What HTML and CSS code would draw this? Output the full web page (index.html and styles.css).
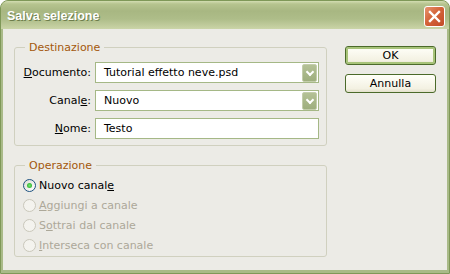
FILE: index.html
```html
<!DOCTYPE html>
<html lang="it">
<head>
  <meta charset="UTF-8">
  <title>Salva selezione</title>
  <link rel="stylesheet" href="styles.css">
</head>
<body>
  <div class="window">
    <div class="titlebar">
      <span class="title">Salva selezione</span>
      <button class="close" aria-label="Chiudi">
        <svg width="13" height="13" viewBox="0 0 13 13">
          <path d="M2 2 L11 11 M11 2 L2 11" stroke="#fff" stroke-width="2.4" stroke-linecap="square"/>
        </svg>
      </button>
    </div>

    <div class="client">
      <div class="groups">
        <fieldset class="group">
          <legend>Destinazione</legend>
          <div class="form">
            <label><u>D</u>ocumento:</label>
            <div class="select"><span>Tutorial effetto neve.psd</span><span class="arrow"></span></div>

            <label>Canal<u>e</u>:</label>
            <div class="select"><span>Nuovo</span><span class="arrow"></span></div>

            <label><u>N</u>ome:</label>
            <div class="field">Testo</div>
          </div>
        </fieldset>

        <fieldset class="group op">
          <legend>Operazione</legend>
          <div class="radios">
            <div class="radio checked"><span class="dot"></span><span>Nuovo canal<u>e</u></span></div>
            <div class="radio disabled"><span class="dot"></span><span><u>A</u>ggiungi a canale</span></div>
            <div class="radio disabled"><span class="dot"></span><span>S<u>o</u>ttrai dal canale</span></div>
            <div class="radio disabled"><span class="dot"></span><span><u>I</u>nterseca con canale</span></div>
          </div>
        </fieldset>
      </div>

      <div class="buttons">
        <button class="btn default">OK</button>
        <button class="btn">Annulla</button>
      </div>
    </div>
  </div>
</body>
</html>
```

FILE: styles.css
```css
:root {
  --frame: #a9ba88;
  --frame-dark: #7f9858;
  --client: #ecebe6;
  --group-line: #d0d0bf;
  --legend: #a3580c;
  --field-line: #a5b886;
  --text: #000;
  --disabled: #aca899;
}

* {
  box-sizing: border-box;
}

body {
  margin: 0;
  font-family: "DejaVu Sans", Verdana, sans-serif;
  font-size: 11px;
  background: #fff;
}

.window {
  width: 450px;
  height: 274px;
  display: flex;
  flex-direction: column;
  background: var(--frame);
  border: 1px solid var(--frame-dark);
  border-radius: 8px 8px 0 0;
  overflow: hidden;
}

.titlebar {
  height: 28px;
  flex: none;
  display: flex;
  align-items: center;
  justify-content: space-between;
  padding: 0 4px 0 6px;
  background: linear-gradient(#d3ddb2 0, #b6c48f 3px, #a8b782 10px, #aebd89 18px, #c2cd9e 25px, #cbd5a8 28px);
}

.title {
  font-family: "Liberation Sans", Arial, sans-serif;
  font-weight: bold;
  font-size: 12.5px;
  color: #fff;
  text-shadow: 1px 1px 0 #6d7d4c;
  margin-top: 2px;
}

.close {
  width: 21px;
  height: 21px;
  padding: 0;
  margin-top: 2px;
  display: flex;
  align-items: center;
  justify-content: center;
  border: 1px solid #fff;
  border-radius: 3px;
  background: linear-gradient(135deg, #e79470 0%, #d4643a 45%, #c24b27 100%);
}

.client {
  flex: 1;
  display: flex;
  margin: 0 2px 3px 2px;
  background: var(--client);
}

.groups {
  padding-left: 11px;
  width: 324px;
}

.group {
  width: 313px;
  margin: 12px 0 0;
  padding: 8px 7px 6px 0;
  border: 1px solid var(--group-line);
  border-radius: 3px;
  min-width: 0;
}

.group legend {
  margin-left: 10px;
  padding: 0 4px;
  line-height: 13px;
  color: var(--legend);
}

.group.op {
  margin-top: 13px;
  padding: 3px 0 1px 0;
}

.form {
  display: grid;
  grid-template-columns: 69px 224px;
  grid-template-rows: 21px 21px 21px;
  column-gap: 4px;
  row-gap: 7px;
  padding-left: 7px;
  align-items: center;
}

.form label {
  text-align: right;
  color: var(--text);
}

.select, .field {
  height: 100%;
  display: flex;
  align-items: center;
  justify-content: space-between;
  padding: 0 1px 0 8px;
  background: #fff;
  border: 1px solid var(--field-line);
  font-size: 11px;
}

.arrow {
  width: 15px;
  height: 18px;
  border: 1px solid #c3cdab;
  border-radius: 2px;
  background: linear-gradient(#b4c196, #9eae7e);
  position: relative;
}

.arrow::after {
  content: "";
  position: absolute;
  left: 4px;
  top: 4px;
  width: 4px;
  height: 4px;
  border-right: 2px solid #fff;
  border-bottom: 2px solid #fff;
  transform: rotate(45deg);
}

.radios {
  display: flex;
  flex-direction: column;
  padding-left: 8px;
}

.radio {
  height: 20px;
  display: flex;
  align-items: center;
  gap: 3px;
}

.radio .dot {
  width: 13px;
  height: 13px;
  border-radius: 50%;
  border: 1px solid #cac8bb;
  background: #f4f3ee;
  display: flex;
  align-items: center;
  justify-content: center;
}

.radio.checked .dot {
  border-color: #1c5180;
  background: linear-gradient(135deg, #dcdcd6, #fff);
}

.radio.checked .dot::after {
  content: "";
  width: 5px;
  height: 5px;
  border-radius: 50%;
  background: radial-gradient(#6ee86e, #21a121);
}

.radio.disabled {
  color: var(--disabled);
}

.buttons {
  display: flex;
  flex-direction: column;
  gap: 9px;
  padding: 17px 0 0 18px;
}

.btn {
  width: 91px;
  height: 19px;
  padding: 0;
  font-family: inherit;
  font-size: 11px;
  color: var(--text);
  border: 1px solid #4b6a2a;
  border-radius: 3px;
  background: linear-gradient(#fffff9, #f3f1e2 80%, #e3e0cc);
}

.btn.default {
  box-shadow: inset 0 0 0 2px #a7c379;
}
```
